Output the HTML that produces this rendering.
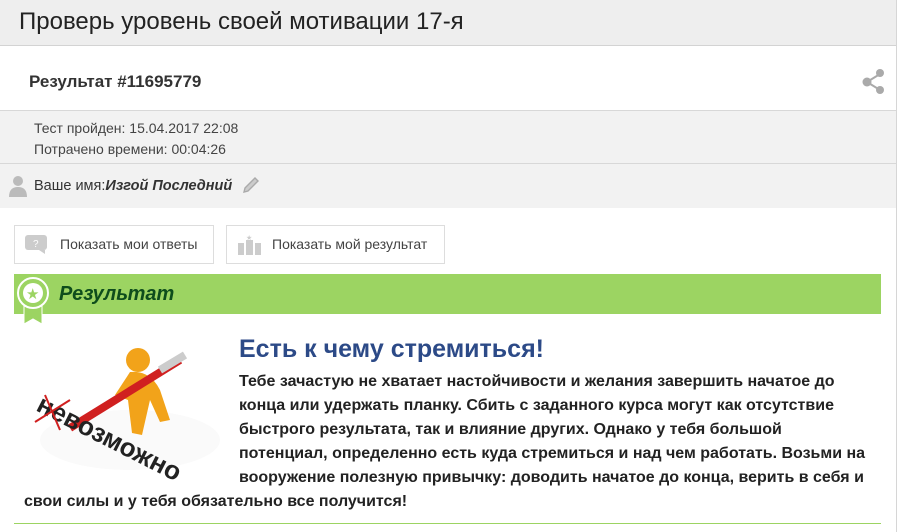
<!DOCTYPE html>
<html><head><meta charset="utf-8"><style>
body{margin:0;width:899px;height:532px;overflow:hidden;background:#fff;font-family:"Liberation Sans",Arial,sans-serif;color:#333;position:relative}
.wrap{position:absolute;left:0;top:0;width:896px;height:532px;border-right:1px solid #d6d6d6}
.hdr{height:45px;background:#eee;border-bottom:1px solid #d3d3d3;font-size:24px;color:#222;line-height:44px;padding-left:19px}
.res{height:64px;border-bottom:1px solid #d8d8d8;position:relative}
.info{height:53px;background:#f2f2f2;border-bottom:1px solid #d8d8d8;font-size:14px;color:#444;padding-left:34px;line-height:21px;padding-top:7px;box-sizing:border-box}
.name{height:44px;background:#f2f2f2;font-size:14.5px;line-height:44px;padding-left:34px;position:relative;color:#333}
.btn{position:absolute;top:225px;border:1px solid #ddd;background:#fff;font-size:14px;color:#444;line-height:37px;box-sizing:border-box;height:39px}
.bar{position:absolute;left:14px;top:274px;width:867px;height:40px;background:#9cd462}
.bar span{position:absolute;left:45px;top:9px;font-size:20px;font-weight:bold;font-style:italic;color:#0e4d1c}
h2{position:absolute;left:239px;top:335px;margin:0;font-size:25px;color:#2c4a87;font-weight:bold}
.txt{position:absolute;left:24px;top:370px;width:845px;font-size:16px;font-weight:bold;line-height:24px;color:#222}
</style></head><body><div class="wrap">
<div class="hdr">Проверь уровень своей мотивации 17-я</div>
<div class="res"></div>
<b style="position:absolute;left:29px;top:72px;font-size:17px;color:#333">Результат #11695779</b>
<svg style="position:absolute;left:861px;top:68px" width="26" height="28"><g stroke="#aaa" stroke-width="2"><line x1="6" y1="14" x2="19" y2="6"/><line x1="6" y1="14" x2="19" y2="22"/></g><circle cx="19" cy="5" r="4" fill="#aaa"/><circle cx="6" cy="14" r="4.5" fill="#aaa"/><circle cx="19" cy="22" r="4" fill="#aaa"/></svg>
<div class="info">Тест пройден: 15.04.2017 22:08<br>Потрачено времени: 00:04:26</div>
<div class="name">Ваше имя:<b><i>Изгой Последний</i></b></div>
<svg style="position:absolute;left:9px;top:175px" width="18" height="22"><circle cx="9" cy="6" r="5" fill="#bbb"/><path d="M0 22 Q0 12 9 12 Q18 12 18 22Z" fill="#bbb"/></svg>
<svg style="position:absolute;left:242px;top:176px" width="18" height="18"><path d="M2 16 L3 12 L13 2 L16 5 L6 15Z" fill="#ccc" stroke="#aaa" stroke-width="1.4"/></svg>
<div class="btn" style="left:14px;width:200px;padding-left:45px">Показать мои ответы</div>
<svg style="position:absolute;left:25px;top:235px" width="24" height="20"><rect x="0" y="0" width="22" height="15" rx="3" fill="#ccc"/><path d="M14 15 L20 15 L20 19Z" fill="#ccc"/><text x="8" y="12" font-size="10" fill="#fff" font-family="Liberation Sans">?</text></svg>
<div class="btn" style="left:226px;width:219px;padding-left:45px">Показать мой результат</div>
<svg style="position:absolute;left:238px;top:234px" width="24" height="22"><rect x="0" y="9" width="6" height="12" fill="#ccc"/><rect x="8" y="6" width="7" height="15" fill="#ccc"/><rect x="17" y="9" width="6" height="12" fill="#ccc"/><text x="8" y="6" font-size="7" fill="#ccc">★</text></svg>
<div class="bar"><span>Результат</span></div>
<svg style="position:absolute;left:16px;top:276px" width="34" height="50"><path d="M8 28 L8 48 L17 43 L26 48 L26 28Z" fill="#9cd462" stroke="#fff" stroke-width="1"/><circle cx="17" cy="17" r="15" fill="#9cd462" stroke="#fff" stroke-width="2"/><circle cx="17" cy="17" r="10" fill="#fff"/><text x="10" y="23" font-size="15" fill="#9cd462">★</text></svg>
<svg style="position:absolute;left:30px;top:340px" width="200" height="140"><ellipse cx="100" cy="100" rx="90" ry="30" fill="#fafafa"/><circle cx="108" cy="20" r="12" fill="#f2a31a"/><path d="M100 32 Q120 30 130 50 L140 80 L130 82 L120 60 L112 95 L102 93 L98 60 L85 55Z" fill="#f2a31a"/><path d="M40 88 L150 20" stroke="#d02020" stroke-width="8"/><path d="M130 30 L155 15" stroke="#ccc" stroke-width="8"/><text x="5" y="70" transform="rotate(27 5 70)" font-size="26" font-weight="bold" fill="#222" font-family="Liberation Sans">невозможно</text><path d="M5 82 L40 60 M15 55 L30 90" stroke="#d02020" stroke-width="2"/></svg>
<h2>Есть к чему стремиться!</h2>
<div class="txt"><div style="padding-left:215px">Тебе зачастую не хватает настойчивости и желания завершить начатое до конца или удержать планку. Сбить с заданного курса могут как отсутствие быстрого результата, так и влияние других. Однако у тебя большой потенциал, определенно есть куда стремиться и над чем работать. Возьми на вооружение полезную привычку: доводить начатое до конца, верить в себя и</div>свои силы и у тебя обязательно все получится!</div>
<div style="position:absolute;left:14px;top:523px;width:867px;height:1px;background:#9cd462"></div>
</div></body></html>
